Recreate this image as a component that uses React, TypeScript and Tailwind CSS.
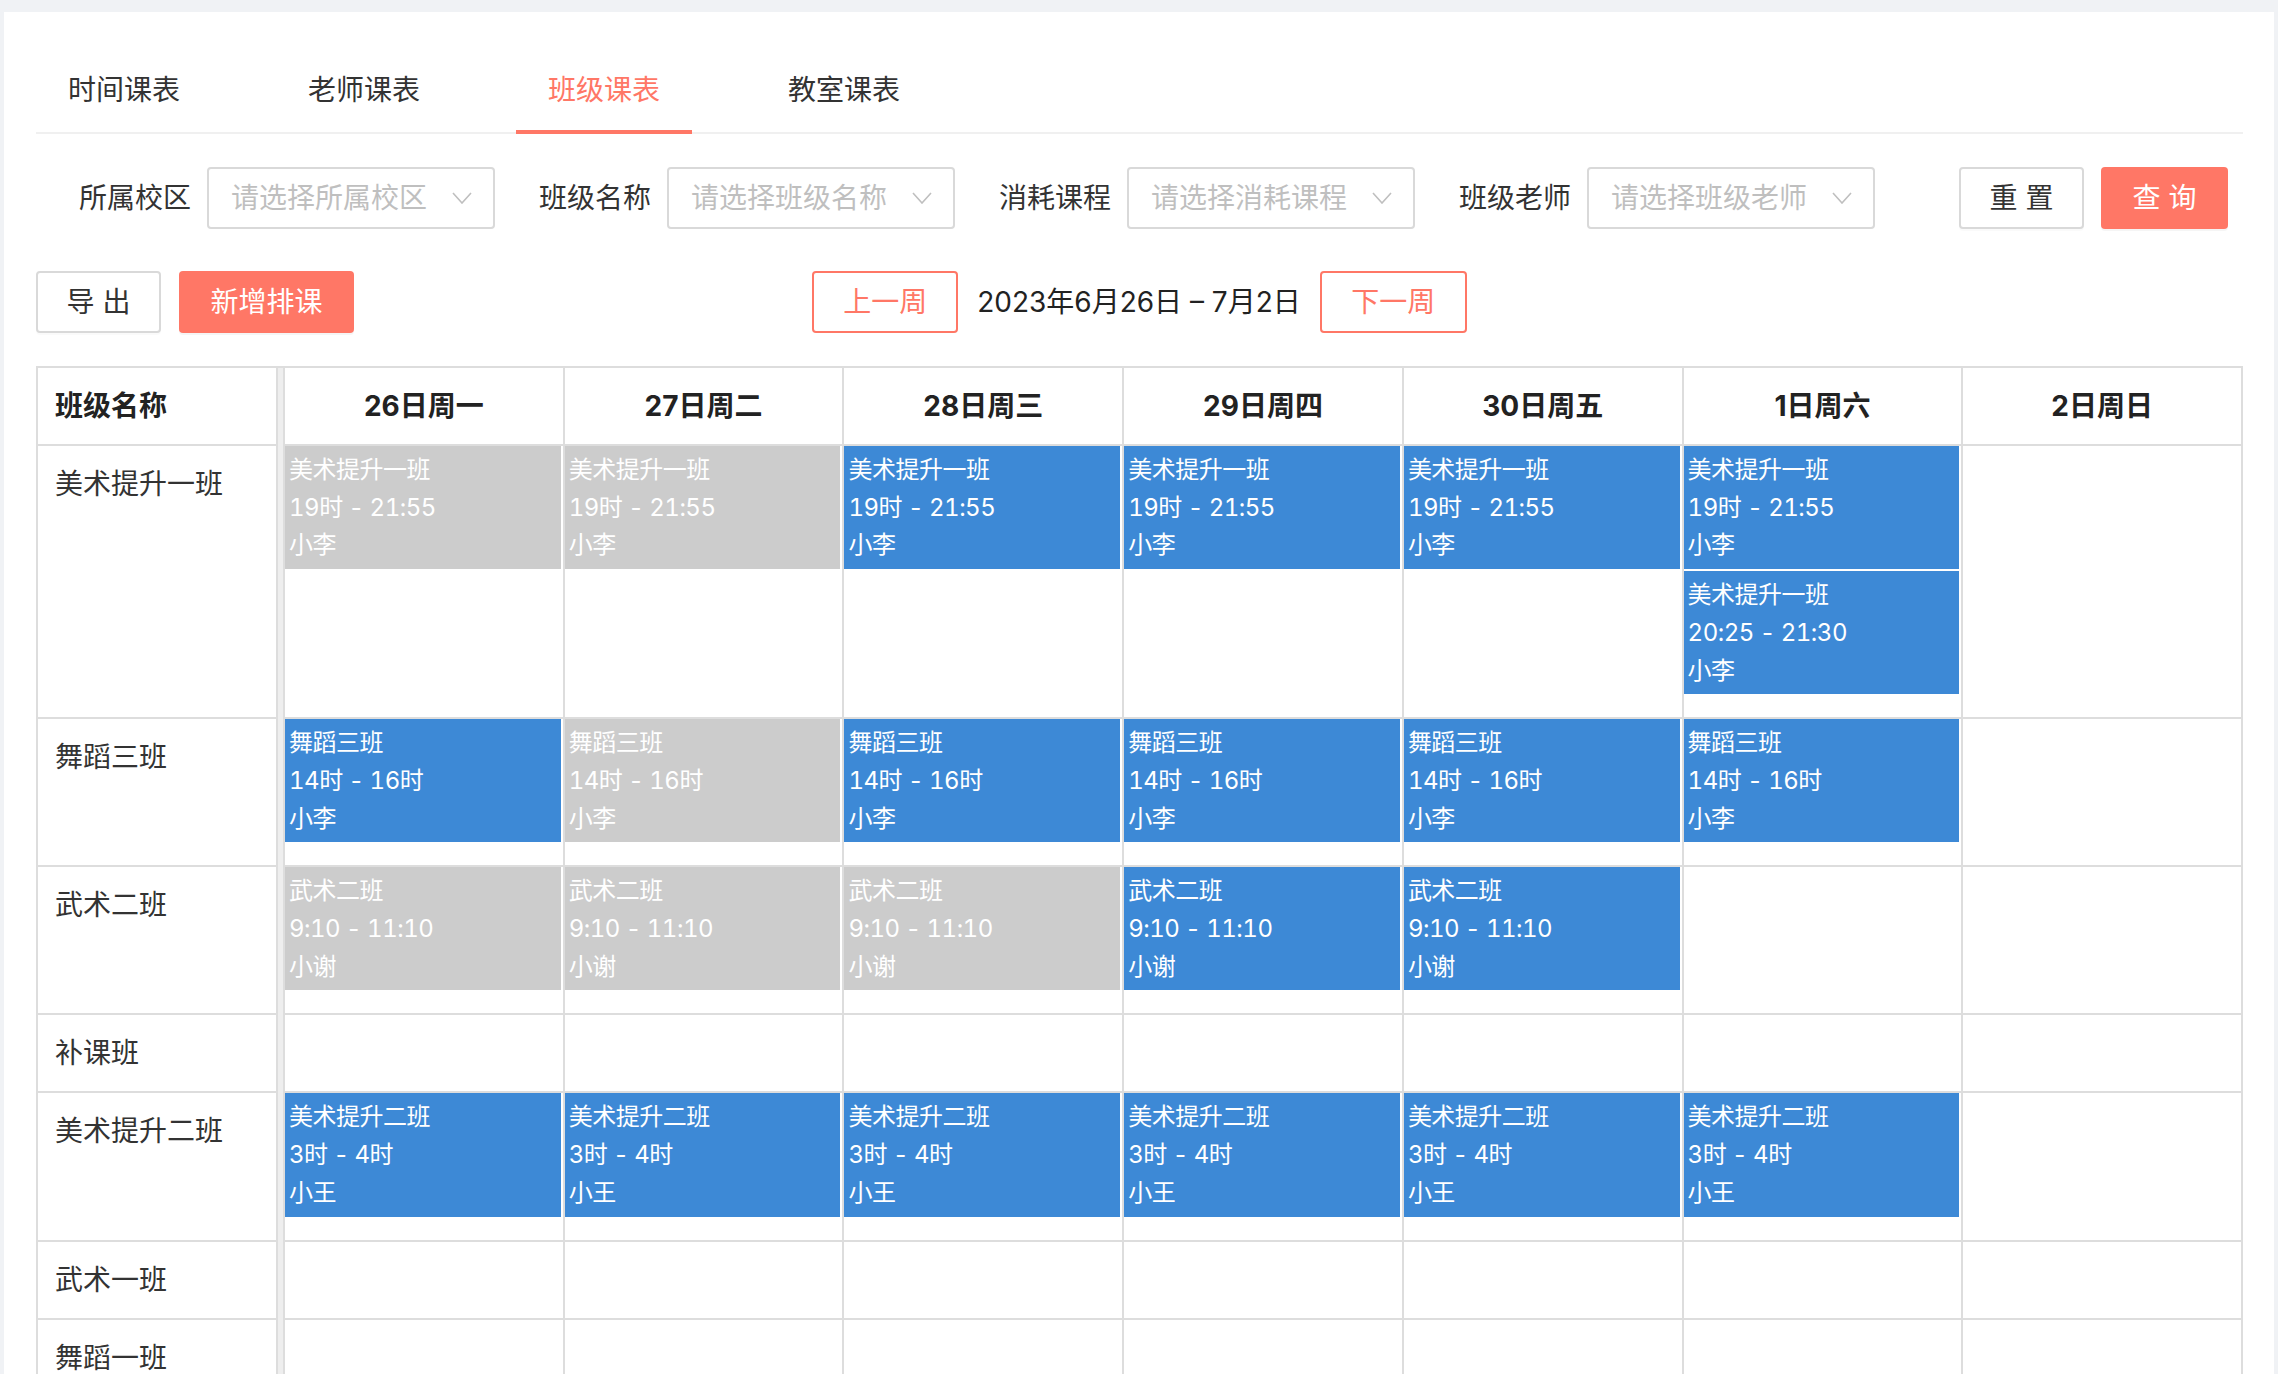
import React from "react";

type Lesson = { title: string; time: string; teacher: string; past?: boolean };

const SALMON = "#ff7766";

function ev(title: string, time: string, teacher: string, past = false): Lesson {
  return { title, time, teacher, past };
}

const days = ["26日周一", "27日周二", "28日周三", "29日周四", "30日周五", "1日周六", "2日周日"];

const rows: { name: string; cells: Lesson[][] }[] = [
  {
    name: "美术提升一班",
    cells: [
      [ev("美术提升一班", "19时 - 21:55", "小李", true)],
      [ev("美术提升一班", "19时 - 21:55", "小李", true)],
      [ev("美术提升一班", "19时 - 21:55", "小李")],
      [ev("美术提升一班", "19时 - 21:55", "小李")],
      [ev("美术提升一班", "19时 - 21:55", "小李")],
      [ev("美术提升一班", "19时 - 21:55", "小李"), ev("美术提升一班", "20:25 - 21:30", "小李")],
      [],
    ],
  },
  {
    name: "舞蹈三班",
    cells: [
      [ev("舞蹈三班", "14时 - 16时", "小李")],
      [ev("舞蹈三班", "14时 - 16时", "小李", true)],
      [ev("舞蹈三班", "14时 - 16时", "小李")],
      [ev("舞蹈三班", "14时 - 16时", "小李")],
      [ev("舞蹈三班", "14时 - 16时", "小李")],
      [ev("舞蹈三班", "14时 - 16时", "小李")],
      [],
    ],
  },
  {
    name: "武术二班",
    cells: [
      [ev("武术二班", "9:10 - 11:10", "小谢", true)],
      [ev("武术二班", "9:10 - 11:10", "小谢", true)],
      [ev("武术二班", "9:10 - 11:10", "小谢", true)],
      [ev("武术二班", "9:10 - 11:10", "小谢")],
      [ev("武术二班", "9:10 - 11:10", "小谢")],
      [],
      [],
    ],
  },
  { name: "补课班", cells: [[], [], [], [], [], [], []] },
  {
    name: "美术提升二班",
    cells: [0, 1, 2, 3, 4, 5].map(() => [ev("美术提升二班", "3时 - 4时", "小王")]).concat([[]]),
  },
  { name: "武术一班", cells: [[], [], [], [], [], [], []] },
  { name: "舞蹈一班", cells: [[], [], [], [], [], [], []] },
  { name: "补课二班", cells: [[], [], [], [], [], [], []] },
];

function Chevron() {
  return (
    <svg width="20" height="12" viewBox="0 0 20 12" fill="none">
      <polyline points="1,1 10,11 19,1" stroke="#bfbfbf" strokeWidth="1.6" />
    </svg>
  );
}

function Select({ label, placeholder }: { label: string; placeholder: string }) {
  return (
    <div className="flex items-center gap-[16px]">
      <span className="text-[28px] text-[#333] whitespace-nowrap">{label}</span>
      <div className="w-[288px] h-[62px] border-2 border-[#d9d9d9] rounded-[4px] flex items-center justify-between pl-[22px] pr-[21px]">
        <span className="text-[28px] text-[#bfbfbf] whitespace-nowrap">{placeholder}</span>
        <Chevron />
      </div>
    </div>
  );
}

function LessonBlock({ l }: { l: Lesson }) {
  return (
    <div
      className={`${l.past ? "bg-[#cccccc]" : "bg-[#3d89d6]"} text-white text-[24px] leading-[37.7px] tabular-nums tracking-[-0.5px] px-[4px] py-[5px] mr-[2px]`}
    >
      <div>{l.title}</div>
      <div>{l.time}</div>
      <div>{l.teacher}</div>
    </div>
  );
}

export default function App() {
  const tabs = ["时间课表", "老师课表", "班级课表", "教室课表"];
  return (
    <div className="h-[1374px] overflow-hidden bg-[#f0f2f5] pt-[12px] px-[4px] font-['Inter','Noto_Sans_CJK_SC',sans-serif]">
      <div className="bg-white h-full pt-[56px] pl-[32px] pr-[31px]">
        {/* tabs */}
        <div className="flex border-b-2 border-[#f0f0f0]">
          {tabs.map((t, i) => (
            <div
              key={t}
              className={`relative px-[32px] pb-[20px] mr-[64px] text-[28px] leading-[44px] ${i === 2 ? "text-[#ff7766]" : "text-[#333]"}`}
            >
              {t}
              {i === 2 && <div className="absolute left-0 right-0 bottom-[-2px] h-[4px] bg-[#ff7766]" />}
            </div>
          ))}
        </div>

        {/* filters */}
        <div className="flex items-center mt-[33px] pl-[43px] pr-[15px]">
          <div className="flex items-center gap-[44px]">
            <Select label="所属校区" placeholder="请选择所属校区" />
            <Select label="班级名称" placeholder="请选择班级名称" />
            <Select label="消耗课程" placeholder="请选择消耗课程" />
            <Select label="班级老师" placeholder="请选择班级老师" />
          </div>
          <div className="ml-auto flex gap-[17px]">
            <button className="w-[125px] h-[62px] border-2 border-[#d9d9d9] rounded-[4px] text-[28px] text-[#333] bg-white shadow-[0_2px_0_rgba(0,0,0,0.02)]">
              重 置
            </button>
            <button
              className="w-[127px] h-[62px] rounded-[4px] text-[28px] text-white shadow-[0_2px_0_rgba(0,0,0,0.04)]"
              style={{ background: SALMON }}
            >
              查 询
            </button>
          </div>
        </div>

        {/* actions + week switch */}
        <div className="grid grid-cols-[1fr_auto_1fr] items-center mt-[42px]">
          <div className="flex gap-[18px]">
            <button className="w-[125px] h-[62px] border-2 border-[#d9d9d9] rounded-[4px] text-[28px] text-[#333] bg-white shadow-[0_2px_0_rgba(0,0,0,0.02)]">
              导 出
            </button>
            <button className="w-[175px] h-[62px] rounded-[4px] text-[28px] text-white bg-[#ff7766] whitespace-nowrap shadow-[0_2px_0_rgba(0,0,0,0.04)]">
              新增排课
            </button>
          </div>
          <div className="flex items-center">
            <button className="w-[146px] h-[62px] border-2 border-[#ff7766] rounded-[4px] text-[28px] text-[#ff7766] bg-white">
              上一周
            </button>
            <span className="mx-[19px] text-[28px] text-[#222] whitespace-nowrap">2023年6月26日 – 7月2日</span>
            <button className="w-[147px] h-[62px] border-2 border-[#ff7766] rounded-[4px] text-[28px] text-[#ff7766] bg-white">
              下一周
            </button>
          </div>
          <div />
        </div>

        {/* table */}
        <div className="mt-[33px]">
          <div className="flex">
            <div className="w-[242px] shrink-0 border-2 border-[#dddddd] px-[17px] py-[16px] text-[28px] leading-[44px] font-bold text-[#222]">
              班级名称
            </div>
            <div className="w-[5px] shrink-0 bg-[#eeeeee] border-t-2 border-[#dddddd]" />
            {days.map((d, i) => (
              <div
                key={d}
                className={`flex-1 border-t-2 border-b-2 border-l-2 border-[#dddddd] py-[16px] text-center text-[28px] leading-[44px] font-bold text-[#222] ${i === 6 ? "border-r-2" : ""}`}
              >
                {d}
              </div>
            ))}
          </div>
          {rows.map((r) => (
            <div key={r.name} className="flex">
              <div className="w-[242px] shrink-0 border-x-2 border-b-2 border-[#dddddd] px-[17px] py-[16px] text-[28px] leading-[44px] text-[#333]">
                {r.name}
              </div>
              <div className="w-[5px] shrink-0 bg-[#eeeeee]" />
              {r.cells.map((c, i) => (
                <div
                  key={i}
                  className={`flex-1 min-w-0 border-l-2 border-b-2 border-[#dddddd] flex flex-col gap-[2px] ${c.length ? "pb-[23px]" : ""} ${i === 6 ? "border-r-2" : ""}`}
                >
                  {c.map((l, j) => (
                    <LessonBlock key={j} l={l} />
                  ))}
                </div>
              ))}
            </div>
          ))}
        </div>
      </div>
    </div>
  );
}
